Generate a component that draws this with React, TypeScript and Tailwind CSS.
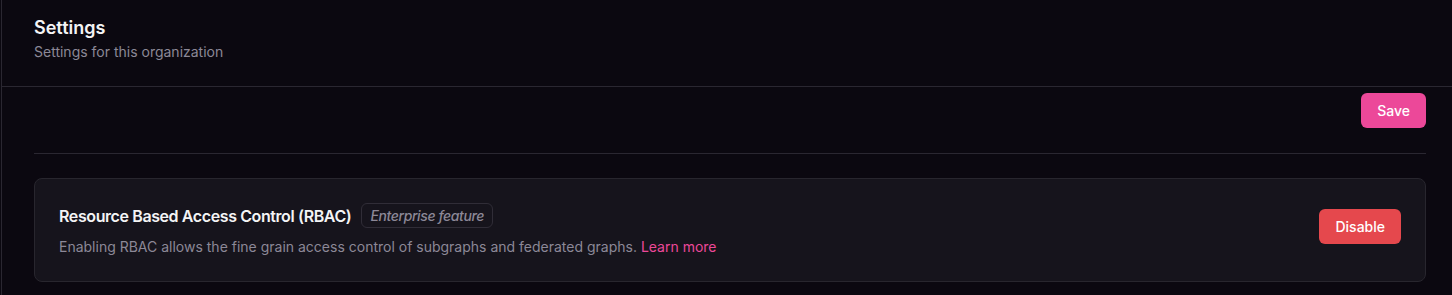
import React from "react";

const font = { fontFamily: "Inter, 'Noto Sans', sans-serif" };

export default function App() {
  return (
    <div className="min-h-[295px] w-full bg-[#0b0810]" style={font}>
      <div className="ml-px min-h-[295px] border-l border-[#2a2731]">
        {/* header */}
        <div className="border-b border-[#2a2731] pl-8 pr-[26px] pt-[14px] pb-6">
          <h1 className="text-lg leading-7 font-semibold text-[#f4f4f5]">Settings</h1>
          <p className="text-sm leading-5 text-[#8c8897]">Settings for this organization</p>
        </div>

        <div className="pl-8 pr-[26px]">
          <div className="flex justify-end pt-[6px]">
            <button className="h-[35px] rounded-md bg-[#ec4899] px-4 text-sm font-medium text-white">
              Save
            </button>
          </div>

          <div className="mt-[25px] border-t border-[#2a2731]" />

          {/* RBAC card */}
          <div className="mt-6 flex items-start justify-between rounded-lg border border-[#28262e] bg-[#16141c] p-6">
            <div>
              <div className="flex items-center gap-[10px] tracking-tight">
                <h3 className="text-base font-semibold text-[#f4f4f5]">
                  Resource Based Access Control (RBAC)
                </h3>
                <span className="flex h-[25px] items-center rounded-md border border-[#302d37] px-2 text-sm font-medium italic text-[#8c8897]">
                  Enterprise feature
                </span>
              </div>
              <p className="mt-[9px] text-sm leading-5 text-[#8c8897]">
                Enabling RBAC allows the fine grain access control of subgraphs and federated graphs.{" "}
                <a className="text-[#ec4899]">Learn more</a>
              </p>
            </div>
            <button className="mt-[6px] h-[35px] rounded-md bg-[#e5484d] px-4 text-sm font-medium text-white">
              Disable
            </button>
          </div>
        </div>
      </div>
    </div>
  );
}
